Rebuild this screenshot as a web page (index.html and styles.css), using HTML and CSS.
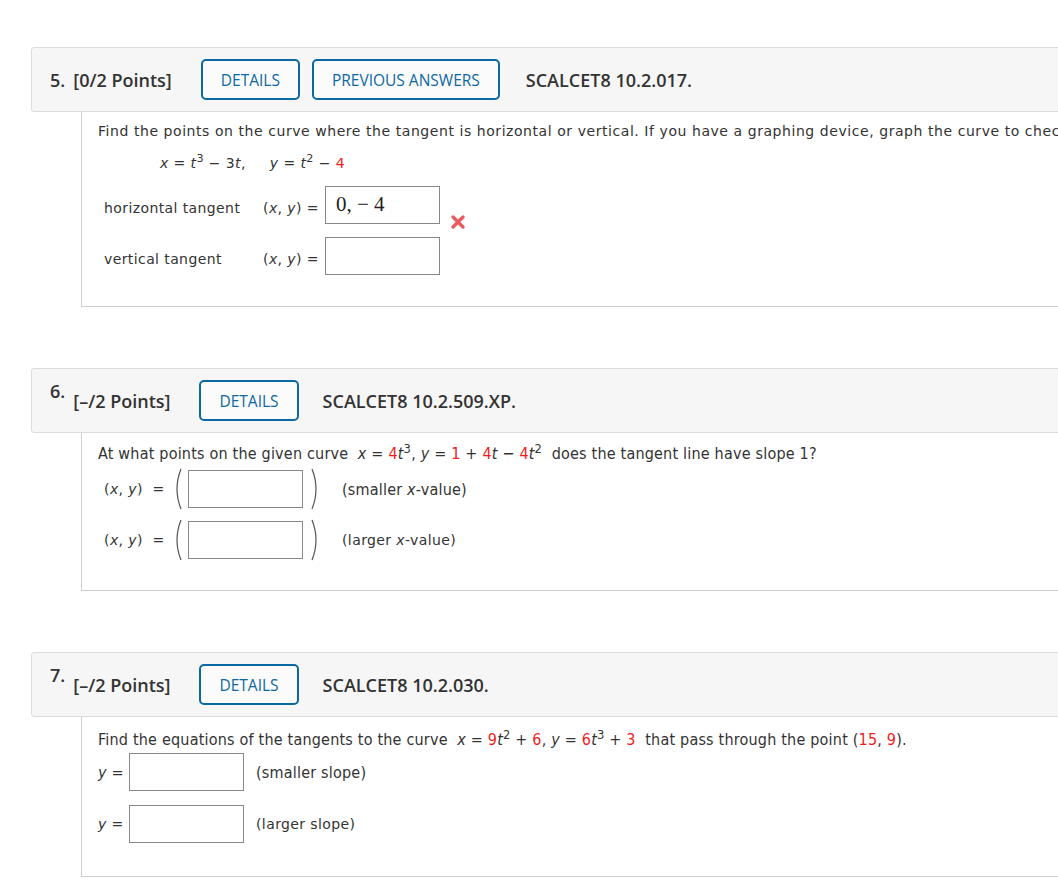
FILE: index.html
```html
<!DOCTYPE html>
<html>
<head>
<meta charset="utf-8">
<link rel="stylesheet" href="styles.css">
</head>
<body>
<div class="page">

  <section class="question q5">
    <div class="q-header">
      <span class="q-num">5.</span>
      <span class="q-points">[0/2 Points]</span>
      <span class="btn">DETAILS</span>
      <span class="btn btn-prev">PREVIOUS ANSWERS</span>
      <span class="q-code">SCALCET8 10.2.017.</span>
    </div>
    <div class="q-body body-a">
      <p class="prompt wide">Find the points on the curve where the tangent is horizontal or vertical. If you have a graphing device, graph the curve to check your work.</p>
      <p class="equation"><i>x</i> = <i>t</i><sup>3</sup> − 3<i>t</i>,<span class="eq-gap"></span><i>y</i> = <i>t</i><sup>2</sup> − <span class="red">4</span></p>
      <div class="row row-first">
        <span class="row-label">horizontal tangent</span>
        <span class="xy">(<i>x</i>, <i>y</i>) =</span>
        <span class="box box-filled">0, − 4</span>
        <svg class="xmark" width="16" height="16" viewBox="0 0 16 16"><path d="M3 3 L13 13 M13 3 L3 13" stroke="#ea5a5f" stroke-width="3.4" stroke-linecap="round"/></svg>
      </div>
      <div class="row row-second">
        <span class="row-label">vertical tangent</span>
        <span class="xy">(<i>x</i>, <i>y</i>) =</span>
        <span class="box"></span>
      </div>
    </div>
  </section>

  <section class="question q6">
    <div class="q-header">
      <span class="q-num q-num-raised">6.</span>
      <span class="q-points">[–/2 Points]</span>
      <span class="btn">DETAILS</span>
      <span class="q-code">SCALCET8 10.2.509.XP.</span>
    </div>
    <div class="q-body body-b">
      <p class="prompt narrow">At what points on the given curve&nbsp; <i>x</i> = <span class="red">4</span><i>t</i><sup>3</sup>, <i>y</i> = <span class="red">1</span> + <span class="red">4</span><i>t</i> − <span class="red">4</span><i>t</i><sup>2</sup>&nbsp; does the tangent line have slope 1?</p>
      <div class="row row-first-b">
        <span class="xy2">(<i>x</i>, <i>y</i>)&nbsp; =</span>
        <svg class="paren" width="12" height="44" viewBox="0 0 12 44"><path d="M9 2 Q1 22 9 42" fill="none" stroke="#555" stroke-width="1.2"/></svg>
        <span class="box"></span>
        <svg class="paren paren-r" width="12" height="44" viewBox="0 0 12 44"><path d="M3 2 Q11 22 3 42" fill="none" stroke="#555" stroke-width="1.2"/></svg>
        <span class="hint narrow">(smaller <i>x</i>-value)</span>
      </div>
      <div class="row row-second-b">
        <span class="xy2">(<i>x</i>, <i>y</i>)&nbsp; =</span>
        <svg class="paren" width="12" height="44" viewBox="0 0 12 44"><path d="M9 2 Q1 22 9 42" fill="none" stroke="#555" stroke-width="1.2"/></svg>
        <span class="box"></span>
        <svg class="paren paren-r" width="12" height="44" viewBox="0 0 12 44"><path d="M3 2 Q11 22 3 42" fill="none" stroke="#555" stroke-width="1.2"/></svg>
        <span class="hint">(larger <i>x</i>-value)</span>
      </div>
    </div>
  </section>

  <section class="question q7">
    <div class="q-header">
      <span class="q-num q-num-raised">7.</span>
      <span class="q-points">[–/2 Points]</span>
      <span class="btn">DETAILS</span>
      <span class="q-code">SCALCET8 10.2.030.</span>
    </div>
    <div class="q-body body-c">
      <p class="prompt narrow">Find the equations of the tangents to the curve&nbsp; <i>x</i> = <span class="red">9</span><i>t</i><sup>2</sup> + <span class="red">6</span>, <i>y</i> = <span class="red">6</span><i>t</i><sup>3</sup> + <span class="red">3</span>&nbsp; that pass through the point (<span class="red">15</span>, <span class="red">9</span>).</p>
      <div class="row row-first-c">
        <span class="yeq narrow"><i>y</i> =</span>
        <span class="box"></span>
        <span class="hint2 narrow">(smaller slope)</span>
      </div>
      <div class="row row-second-c">
        <span class="yeq"><i>y</i> =</span>
        <span class="box"></span>
        <span class="hint2">(larger slope)</span>
      </div>
    </div>
  </section>

</div>
</body>
</html>
```
FILE: styles.css
```css
html, body {
  margin: 0;
  padding: 0;
  background: #ffffff;
  overflow: hidden;
}

.page {
  padding: 47px 0 0 31px;
  width: 1100px;
}

.question {
  margin-bottom: 61px;
}

.q-header {
  display: flex;
  align-items: center;
  height: 63px;
  padding-left: 18px;
  background: #f6f6f6;
  border: 1px solid #dcdcdc;
  border-radius: 3px;
  font-family: "Open Sans", "Liberation Sans", sans-serif;
  color: #333;
}

.q-num {
  font-size: 18px;
  font-weight: 600;
  margin-right: 8px;
}

.q-num-raised {
  margin-bottom: 19px;
}

.q-points {
  font-size: 18px;
  font-weight: 600;
  margin-right: 29px;
}

.btn {
  display: flex;
  align-items: center;
  box-sizing: border-box;
  height: 41px;
  padding: 0 18px;
  border: 2px solid #0b68a2;
  border-radius: 5px;
  color: #0b68a2;
  font-size: 15.5px;
  font-weight: 400;
  background: #fbfbfb;
  margin-right: 12px;
}

.btn-prev {
  padding: 0 18px;
  margin-right: 26px;
}

.q6 .btn, .q7 .btn {
  margin-right: 24px;
}

.q-code {
  font-size: 18px;
  font-weight: 600;
}

.q-body {
  margin-left: 50px;
  border-left: 1px solid #cfcfcf;
  border-bottom: 1px solid #cfcfcf;
  padding-left: 16px;
  font-family: Verdana, "DejaVu Sans", sans-serif;
  font-size: 14px;
  letter-spacing: 0.4px;
  color: #333;
}

.body-a { padding-top: 9px; padding-bottom: 31px; }
.body-b { padding-top: 11px; padding-bottom: 31px; }
.body-c { padding-top: 13px; padding-bottom: 33px; }

.prompt {
  margin: 0;
  line-height: 20px;
  white-space: nowrap;
}

.wide {
  letter-spacing: 0.56px;
}

.narrow {
  font-family: "DejaVu Sans Condensed", "Liberation Sans Narrow", "DejaVu Sans", sans-serif;
  font-stretch: condensed;
  font-size: 16px;
  letter-spacing: 0.2px;
}

.equation {
  margin: 12px 0 0 62px;
  line-height: 20px;
}

.eq-gap {
  display: inline-block;
  width: 24px;
}

sup {
  font-size: 0.8em;
  line-height: 0;
  vertical-align: 0.5em;
}

.red {
  color: #f01c1c;
}

.row {
  display: flex;
  align-items: center;
}

.row-first { margin-top: 13px; }
.row-second { margin-top: 13px; }

.row-label {
  box-sizing: border-box;
  width: 165px;
  padding-left: 6px;
  padding-top: 5px;
}

.xy {
  width: 62px;
  padding-top: 5px;
}

.box {
  display: block;
  box-sizing: border-box;
  width: 115px;
  height: 38px;
  border: 1px solid #888;
  background: #fff;
}

.box-filled {
  font-family: "Liberation Serif", "DejaVu Serif", serif;
  font-size: 21px;
  letter-spacing: 0;
  line-height: 34px;
  padding-left: 10px;
  color: #222;
  white-space: nowrap;
}

.xmark {
  align-self: flex-end;
  margin-left: 10px;
  margin-bottom: -6px;
}

.row-first-b { margin-top: 6px; }
.row-second-b { margin-top: 13px; }

.xy2 {
  box-sizing: border-box;
  padding-left: 6px;
  width: 72px;
}

.paren {
  margin: -3px 4px -3px 2px;
}

.paren-r {
  margin: -3px 21px -3px 6px;
}

.row-first-c { margin-top: 3px; }
.row-second-c { margin-top: 14px; }

.yeq {
  width: 31px;
}

.hint2 {
  margin-left: 12px;
}
```
